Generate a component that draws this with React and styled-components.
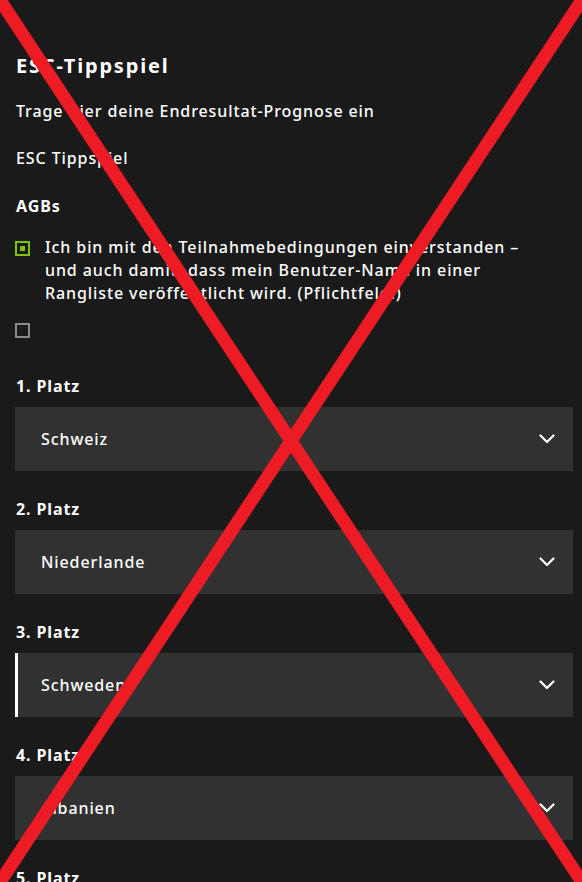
import React from "react";
import styled, { createGlobalStyle } from "styled-components";

const Global = createGlobalStyle`
  html, body { margin: 0; padding: 0; background: #1a1a1a; }
  body { font-family: "Noto Sans", "Open Sans", sans-serif; color: #fff; overflow: hidden; }
`;

const Page = styled.div`
  position: relative;
  width: 582px;
  height: 882px;
  overflow: hidden;
  background: #1a1a1a;
`;

const Content = styled.div`
  display: flex;
  flex-direction: column;
  padding: 52px 9px 0 15px;
  letter-spacing: 0.9px;
`;

const Title = styled.h1`
  margin: 0 0 0 1px;
  font-size: 20px;
  line-height: 28px;
  font-weight: 700;
  letter-spacing: 1.8px;
`;

const Text = styled.p`
  margin: ${(p) => p.$mt || 0}px 0 0 1px;
  font-size: 16px;
  line-height: 24px;
  font-weight: ${(p) => p.$weight || 500};
`;

const CheckRow = styled.label`
  display: flex;
  gap: 15px;
  align-items: flex-start;
  margin-top: ${(p) => p.$mt || 0}px;
  font-size: 16px;
  line-height: 23px;
  font-weight: 500;
`;

const Box = styled.span`
  flex: none;
  box-sizing: border-box;
  width: 15px;
  height: 15px;
  margin-top: ${(p) => p.$offset || 0}px;
  border: 2px solid ${(p) => (p.$checked ? "#7cc400" : "#8a8a8a")};
  display: flex;
  align-items: center;
  justify-content: center;
  &::after {
    content: "";
    width: 5px;
    height: 5px;
    background: ${(p) => (p.$checked ? "#7cc400" : "transparent")};
  }
`;

const CheckText = styled.span`
  max-width: 490px;
`;

const Field = styled.div`
  display: flex;
  flex-direction: column;
  margin-top: ${(p) => p.$mt || 0}px;
`;

const Label = styled.div`
  margin-left: 1px;
  font-size: 16px;
  line-height: 24px;
  font-weight: 700;
`;

const Select = styled.div`
  margin-top: 9px;
  height: 64px;
  background: #313131;
  display: flex;
  align-items: center;
  justify-content: space-between;
  padding: 0 18px 0 26px;
  font-size: 16px;
  font-weight: 500;
  box-shadow: ${(p) => (p.$focused ? "inset 3px 0 0 #ffffff" : "none")};
`;

const Overlay = styled.svg`
  position: absolute;
  inset: 0;
  pointer-events: none;
`;

const Chevron = () => (
  <svg width="16" height="10" viewBox="0 0 16 10" fill="none">
    <polyline points="1.5,1.5 8,8 14.5,1.5" stroke="#fff" strokeWidth="2.2" strokeLinecap="round" strokeLinejoin="round" />
  </svg>
);

const places = [
  { n: 1, v: "Schweiz" },
  { n: 2, v: "Niederlande" },
  { n: 3, v: "Schweden", focused: true },
  { n: 4, v: "Albanien" },
  { n: 5, v: "Italien" },
];

export default function App() {
  return (
    <Page>
      <Global />
      <Content>
        <Title>ESC-Tippspiel</Title>
        <Text $mt={19}>Trage hier deine Endresultat-Prognose ein</Text>
        <Text $mt={23}>ESC Tippspiel</Text>
        <Text $mt={24} $weight={700}>AGBs</Text>
        <CheckRow $mt={18}>
          <Box $checked $offset={5} />
          <CheckText>
            Ich bin mit den Teilnahmebedingungen einverstanden – und auch damit, dass mein Benutzer-Name in einer Rangliste veröffentlicht wird. (Pflichtfeld!)
          </CheckText>
        </CheckRow>
        <CheckRow $mt={18}>
          <Box />
        </CheckRow>
        {places.map((p, i) => (
          <Field key={p.n} $mt={i === 0 ? 36 : 26}>
            <Label>{p.n}. Platz</Label>
            <Select $focused={p.focused}>
              <span>{p.v}</span>
              <Chevron />
            </Select>
          </Field>
        ))}
      </Content>
      <Overlay width="582" height="882" viewBox="0 0 582 882">
        <line x1="0" y1="0" x2="582" y2="882" stroke="#ed1c24" strokeWidth="13" />
        <line x1="582" y1="0" x2="0" y2="882" stroke="#ed1c24" strokeWidth="13" />
      </Overlay>
    </Page>
  );
}
